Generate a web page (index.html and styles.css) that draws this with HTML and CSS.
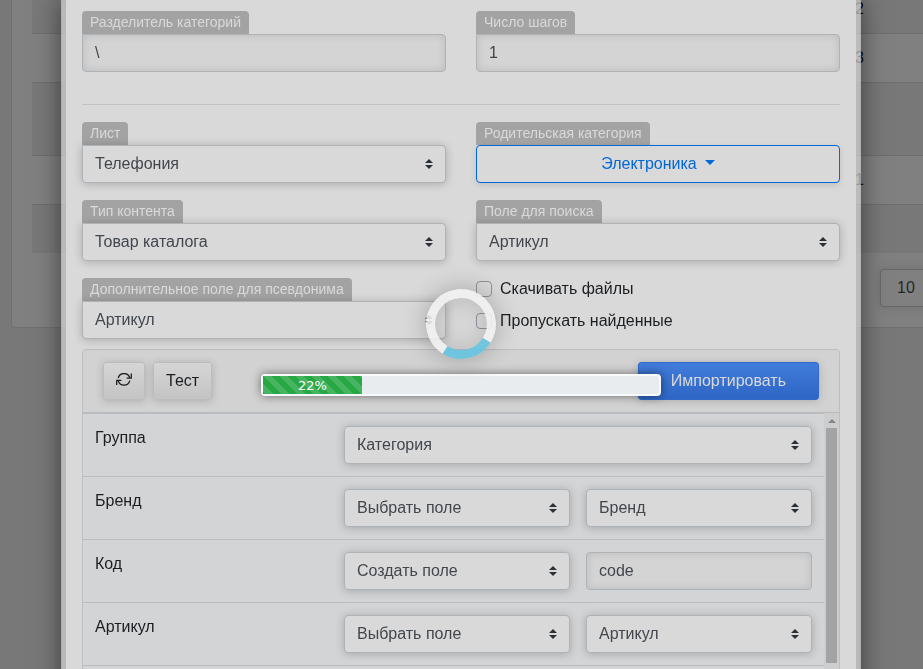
FILE: index.html
```html
<!DOCTYPE html>
<html lang="ru">
<head>
<meta charset="utf-8">
<title>Импорт</title>
<link rel="stylesheet" href="styles.css">
</head>
<body>
<main class="page">
  <section class="panel">
    <table class="records">
      <tr><td></td><td class="num">2</td></tr>
      <tr><td></td><td class="num">3</td></tr>
      <tr class="tall"><td></td><td class="num"></td></tr>
      <tr><td></td><td class="num"><a href="#">1</a></td></tr>
      <tr><td></td><td class="num"></td></tr>
    </table>
    <div class="pager"><button type="button" class="page-size">10</button></div>
  </section>
</main>

<div class="overlay">
  <form class="dialog">
    <div class="fields">
      <div class="field">
        <label for="sep">Разделитель категорий</label>
        <input class="control" id="sep" type="text" value="\">
      </div>
      <div class="field">
        <label for="steps">Число шагов</label>
        <input class="control" id="steps" type="text" value="1">
      </div>
    </div>
    <hr>
    <div class="fields">
      <div class="field">
        <label for="sheet">Лист</label>
        <select class="control" id="sheet"><option>Телефония</option></select>
      </div>
      <div class="field">
        <label for="parent">Родительская категория</label>
        <button class="control picker" id="parent" type="button">Электроника<span class="caret"></span></button>
      </div>
      <div class="field">
        <label for="type">Тип контента</label>
        <select class="control" id="type"><option>Товар каталога</option></select>
      </div>
      <div class="field">
        <label for="search">Поле для поиска</label>
        <select class="control" id="search"><option>Артикул</option></select>
      </div>
      <div class="field">
        <label for="alias">Дополнительное поле для псевдонима</label>
        <select class="control" id="alias"><option>Артикул</option></select>
      </div>
      <div class="checks">
        <label><input type="checkbox">Скачивать файлы</label>
        <label><input type="checkbox">Пропускать найденные</label>
      </div>
    </div>

    <section class="card">
      <header class="toolbar">
        <button class="btn" type="button" aria-label="Обновить">
          <svg width="16" height="16" viewBox="0 1 16 16" fill="none" stroke="currentColor" stroke-width="1.3"><path d="M2.2 6A6 6 0 0 1 13.8 6M13.8 8.6A6 6 0 0 1 2.2 8.6"/><path d="M15.3 1.6V6.2H10.6M.7 13V8.4H5.4"/></svg>
        </button>
        <button class="btn" type="button">Тест</button>
        <button class="btn primary" type="submit">Импортировать</button>
      </header>
      <div class="mapping">
        <div class="rows">
          <div class="row">
            <label for="group">Группа</label>
            <div class="pair">
              <select class="control wide" id="group"><option>Категория</option></select>
            </div>
          </div>
          <div class="row">
            <label for="brand">Бренд</label>
            <div class="pair">
              <select class="control" id="brand"><option>Выбрать поле</option></select>
              <select class="control" aria-label="Поле бренда"><option>Бренд</option></select>
            </div>
          </div>
          <div class="row">
            <label for="code">Код</label>
            <div class="pair">
              <select class="control" id="code"><option>Создать поле</option></select>
              <input class="control" type="text" value="code" aria-label="Имя поля">
            </div>
          </div>
          <div class="row">
            <label for="sku">Артикул</label>
            <div class="pair">
              <select class="control" id="sku"><option>Выбрать поле</option></select>
              <select class="control" aria-label="Поле артикула"><option>Артикул</option></select>
            </div>
          </div>
          <div class="row"></div>
        </div>
        <div class="scrollbar"><span class="arrow"></span><span class="thumb"></span></div>
      </div>
    </section>
  </form>
</div>

<div class="loader">
  <div class="spinner"></div>
  <div class="progress"><div class="bar" style="width:25%">22%</div></div>
</div>
</body>
</html>
```
FILE: styles.css
```css
* { box-sizing: border-box; }

html, body { height: 100%; }

body {
  margin: 0;
  overflow: hidden;
  background: #787878;
  color: #1c1f22;
  font: 16px/24px "Liberation Sans", Arial, sans-serif;
}

button, input, select { font: inherit; color: inherit; }

/* Page behind the dialog */
.panel {
  margin-left: 11px;
  padding: 0 0 20px 20px;
  background: #808080;
  border: 1px solid #707070;
  border-width: 0 0 1px 1px;
  border-radius: 0 0 0 4px;
}

/* scrolled so that the first row is partly out of view */
.records {
  width: 100%;
  margin-top: -16px;
  border-collapse: separate;
  border-spacing: 0;
  table-layout: fixed;
}

.records td {
  height: 49px;
  padding: 0;
  border-top: 1px solid #6e6e6e;
}
.records .tall td { height: 73px; }
.records tr:nth-child(odd) { background: #787878; }
.records .num { width: 68px; color: #0c0e10; }
.records a { color: #0c0f18; text-decoration: none; }

.pager {
  display: flex;
  justify-content: flex-end;
  padding-top: 16px;
}
.page-size {
  width: 59px;
  height: 38px;
  margin-right: -16px;
  padding: 0 16px;
  text-align: left;
  color: #25282b;
  background: #808080;
  border: 1px solid #686868;
  border-radius: 4px;
  box-shadow: 0 0 8px rgba(0, 0, 0, .15);
}

/* Dialog */
.overlay {
  position: fixed;
  inset: 0;
  display: flex;
  justify-content: center;
  align-items: flex-start;
  overflow: hidden;
}

.dialog {
  flex: 0 1 800px;
  min-height: 100%;
  margin-right: 1px;
  padding: 11px 16px;
  background: #d9d9d9;
  background-clip: padding-box;
  border: solid rgba(217, 217, 217, .68);
  border-width: 0 5px;
  box-shadow: 0 0 24px rgba(0, 0, 0, .5);
}

.fields {
  display: grid;
  grid-template-columns: 1fr 1fr;
  gap: 17px 30px;
}

.field label {
  display: block;
  width: fit-content;
  height: 23px;
  padding: 0 8px;
  font-size: 14px;
  line-height: 22px;
  color: #d9d9d9;
  background: #a3a3a3;
  border-radius: 4px 4px 0 0;
}

hr {
  margin: 32px 0 17px;
  border: 0;
  border-top: 1px solid #c2c2c2;
}

.control {
  position: relative;
  display: block;
  width: 100%;
  height: 38px;
  margin: 0;
  padding: 0 12px;
  color: #41474d;
  background: #d9d9d9;
  border: 1px solid #aeb3b8;
  border-radius: 4px;
  box-shadow: 0 1px 10px rgba(0, 0, 0, .22);
}

input.control {
  background: #d4d4d4;
  box-shadow: inset 0 0 8px rgba(0, 0, 0, .12);
}

select.control {
  appearance: none;
  background: #d9d9d9 url("data:image/svg+xml,%3Csvg xmlns='http://www.w3.org/2000/svg' viewBox='0 0 4 5'%3E%3Cpath fill='%232c3136' d='M2 0L0 2h4zm0 5L0 3h4z'/%3E%3C/svg%3E") no-repeat right 12px center / 8px 10px;
}

.field .control:not(.picker) { border-radius: 0 4px 4px 4px; }

.picker {
  color: #0068d8;
  border-color: #0068d8;
  text-align: center;
  box-shadow: 0 2px 6px rgba(0, 0, 0, .12);
}
.caret {
  display: inline-block;
  margin-left: 8px;
  vertical-align: 4px;
  border: solid transparent;
  border-width: 5px 5px 0;
  border-top-color: currentColor;
}

.checks {
  display: flex;
  flex-direction: column;
  gap: 10px;
}
.checks label {
  display: flex;
  align-items: center;
  gap: 8px;
  line-height: 22px;
}
.checks input {
  appearance: none;
  width: 16px;
  height: 16px;
  margin: 0;
  border: 1px solid #8b9299;
  border-radius: 4px;
}

/* Field mapping */
.card {
  margin-top: 10px;
  background: #d3d4d6;
  border: 1px solid #bdbebf;
  border-radius: 4px 4px 0 0;
}

.toolbar {
  display: flex;
  gap: 8px;
  padding: 12px 20px;
  background: #d2d2d2;
  border-bottom: 1px solid #b9b9b9;
  border-radius: 4px 4px 0 0;
}

.btn {
  height: 38px;
  padding: 0 12px;
  background: linear-gradient(#d5d5d5, #c4c4c4);
  border: 1px solid #bcbcbc;
  border-radius: 3px;
  box-shadow: 0 1px 8px rgba(0, 0, 0, .18);
}
.btn svg { display: block; }

.primary {
  margin-left: auto;
  padding: 0 32px;
  color: #d9d9d9;
  background: linear-gradient(#427cdb, #2d66c4);
  border-color: #3069c9;
}

.mapping { display: flex; }
.rows { flex: 1; }

.row {
  display: grid;
  grid-template-columns: 1fr 2fr;
  gap: 15px;
  min-height: 63px;
  padding: 12px;
  border-top: 1px solid #b9bdc1;
}

.pair {
  display: grid;
  grid-template-columns: 1fr 1fr;
  gap: 16px;
}
.wide { grid-column: 1 / -1; }

.scrollbar {
  display: flex;
  flex-direction: column;
  align-items: center;
  width: 15px;
  background: #cecece;
}
.arrow {
  margin: 6px 0 5px;
  border: solid transparent;
  border-width: 0 4px 4px;
  border-bottom-color: #868686;
}
.thumb {
  width: 11px;
  height: 235px;
  background: #a3a3a3;
}

/* Progress layer */
.loader {
  position: fixed;
  inset: 0;
  display: flex;
  flex-direction: column;
  align-items: center;
  justify-content: center;
  gap: 15px;
  padding: 16px 1px 0 0;
}

.spinner {
  width: 70px;
  height: 70px;
  border: 9px solid rgba(242, 242, 242, .88);
  border-bottom-color: rgba(97, 194, 224, .88);
  border-radius: 50%;
  box-shadow: 0 0 24px rgba(0, 0, 0, .25), inset 0 0 24px rgba(0, 0, 0, .15);
  transform: rotate(-13deg);
}

.progress {
  width: 400px;
  height: 22px;
  border: 2px solid #f8f9fa;
  border-radius: 4px;
  background: #e9ecef;
  box-shadow: 0 0 10px rgba(0, 0, 0, .5);
}
.bar {
  height: 18px;
  font: 13px/19px "DejaVu Sans", sans-serif;
  text-align: center;
  color: #fff;
  background: #28a745 linear-gradient(45deg, rgba(255, 255, 255, .15) 25%, transparent 25%, transparent 50%, rgba(255, 255, 255, .15) 50%, rgba(255, 255, 255, .15) 75%, transparent 75%) 0 0 / 16px 16px;
}
```
